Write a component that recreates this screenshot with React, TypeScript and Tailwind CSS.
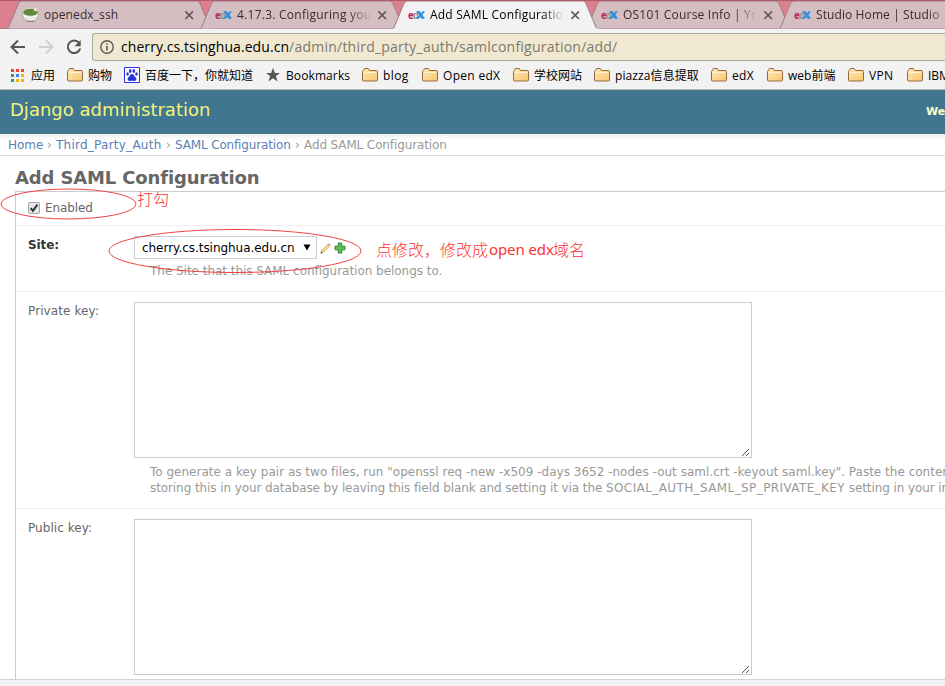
import React from "react";

const ui = "font-['Open_Sans','Noto_Sans_CJK_SC',sans-serif]";
const page = "font-['DejaVu_Sans','Noto_Sans_CJK_SC',sans-serif]";

function EdxLogo() {
  return (
    <svg width="17" height="12" viewBox="0 0 17 12" className="shrink-0">
      <text x="0" y="9.5" fontSize="10" fontWeight="bold" fontFamily="Open Sans, sans-serif" fill="#b72667">e</text>
      <text x="4.8" y="9.5" fontSize="10" fontWeight="bold" fontFamily="Open Sans, sans-serif" fill="#96949a">d</text>
      <path d="M8.500 2.200h3.300l1.500 2 1.200-2H16.500v1.400h-.6l-1.500 2.400 1.700 2.300h.4v1.500h-3l-1.500-2.100L11 9.800H8.500V8.300h.9L11.300 5.900 9.600 3.600H8.500z" fill="#2a8fe2" />
    </svg>
  );
}

function BowlLogo() {
  return (
    <svg width="17" height="16" viewBox="0 0 17 16" className="shrink-0">
      <path d="M.5 5.500c0 5 2.500 8.700 8 8.700s8-3.700 8-8.700z" fill="#fafaf5" stroke="#96948b" strokeWidth=".8" />
      <ellipse cx="8.500" cy="5.300" rx="7.700" ry="3.900" fill="#64883a" stroke="#d9dac8" strokeWidth=".8" />
      <path d="M3 10c3 2 8 2 11 0" stroke="#d4d4cc" fill="none" />
      <circle cx="13.500" cy="2.700" r="1.600" fill="#f6e6ce" />
      <path d="M5 14.300h7" stroke="#777" />
    </svg>
  );
}

function Cross() {
  return (
    <svg width="9" height="9" viewBox="0 0 9 9" className="absolute left-[180px] top-[11px]">
      <path d="M.4.4l7.600 7.600M8 .4L.4 8" stroke="#5f5557" strokeWidth="1.600" />
    </svg>
  );
}

function Tab({ title, active, bowl, tracking }: { title: string; active?: boolean; bowl?: boolean; tracking: string }) {
  return (
    <div className={`relative h-[29px] w-[193px] shrink-0 ${active ? "z-20" : "z-10"}`}>
      <svg width="209" height="30" className="absolute left-0 top-0">
        <path
          d={active ? "M-1 29.500L2 27.500L11.500 3.500Q12.500 1 15 1H190Q192.500 1 193.500 3.500L203.500 27.500L207 29.500Z" : "M1.500 28.500L12 3.500Q13 1 15.500 1H190Q192.500 1 193.500 3.500L204 28.500Z"}
          fill={active ? "#f2f2f2" : "#d4bec2"}
          transform="translate(1.500 0)"
        />
        <path
          d={active ? "M1 28.500L11.500 3.500Q12.500 1 15 1H190Q192.500 1 193.500 3.500L204 28.500" : "M1.500 28.500L12 3.500Q13 1 15.500 1H190Q192.500 1 193.500 3.500L204 28.500"}
          fill="none"
          stroke="#9b7f84"
          transform="translate(1.500 0)"
        />
      </svg>
      <div className="relative flex h-[29px] items-center pl-[17px]">
        {bowl ? <BowlLogo /> : <div className="w-[17px] pt-[1px]"><EdxLogo /></div>}
        <div
          className={`ml-[5px] w-[133px] overflow-hidden whitespace-nowrap text-[12px] leading-[20px] ${tracking} ${active ? "text-black" : "text-[#352d30]"} ${bowl ? "" : "[mask-image:linear-gradient(to_right,black_112px,transparent_135px)]"}`}
        >
          {title}
        </div>
      </div>
      <Cross />
    </div>
  );
}

function Folder() {
  return (
    <svg width="16" height="14" viewBox="0 0 16 14" className="shrink-0">
      <defs>
        <linearGradient id="folder" x1="0" y1="0" x2="1" y2="1">
          <stop offset="0" stopColor="#ffe9bb" />
          <stop offset="1" stopColor="#f9c66c" />
        </linearGradient>
      </defs>
      <path d="M.5 12V3.500L2 1.500V1q0-.5.500-.5H6q.5 0 .5.500l1 1.500h7q1 0 1 1V12q0 1-1 1h-13q-1 0-1-1z" fill="url(#folder)" stroke="#926a43" />
      <path d="M1.500 4.500h13" stroke="#fff2cf" />
    </svg>
  );
}

function Mark({ label, width, tracking = "" }: { label: string; width: string; tracking?: string }) {
  return (
    <div className={`flex shrink-0 items-center gap-[5px] ${width}`}>
      <Folder />
      <span className={`whitespace-nowrap pt-[2px] ${tracking}`}>{label}</span>
    </div>
  );
}

const apps = ["#ea4335", "#ea4335", "#ea4335", "#34a05a", "#3b84e8", "#f0b400", "#34a05a", "#f0b400", "#f0b400"];

function Chrome() {
  return (
    <div className={ui}>
      <div className="flex h-[29px] overflow-hidden border-t border-[#b35c69] bg-[#dc7f8e] pl-[5px] shadow-[inset_0_-1px_0_#a58389]">
        <div className="-mt-px flex">
          <Tab title="openedx_ssh" bowl tracking="tracking-[0.1px]" />
          <Tab title="4.17.3. Configuring your SP" tracking="tracking-[0.25px]" />
          <Tab title="Add SAML Configuration" active tracking="tracking-[0.2px]" />
          <Tab title="OS101 Course Info | Your" tracking="tracking-[0.2px]" />
          <Tab title="Studio Home | Studio" tracking="tracking-[0.1px]" />
        </div>
      </div>
      <div className="flex h-[32px] items-center bg-[#f2f2f2]">
        <div className="flex w-[92px] shrink-0 items-center gap-[12px] pl-[10px] pt-[4px]">
          <svg width="16" height="16" viewBox="0 0 16 16" fill="none" stroke="#555" strokeWidth="2">
            <path d="M15 8H2M8 1.500L1.500 8 8 14.500" />
          </svg>
          <svg width="16" height="16" viewBox="0 0 16 16" fill="none" stroke="#d0d0d0" strokeWidth="2">
            <path d="M1 8h13M8 1.500L14.500 8 8 14.500" />
          </svg>
          <svg width="16" height="16" viewBox="0 0 16 16">
            <path d="M13 3.700A6.300 6.300 0 1 0 14.200 9.500" fill="none" stroke="#555" strokeWidth="2" />
            <path d="M14.700 1v6.200H8.500z" fill="#555" />
          </svg>
        </div>
        <div className="mt-[4px] flex h-[28px] grow items-center rounded-l-[3px] border border-r-0 border-[#aaa6a0] bg-[#f0e8d0] pl-[7px]">
          <svg width="14" height="14" viewBox="0 0 14 14">
            <circle cx="7" cy="7" r="6.200" fill="none" stroke="#5b5b5b" strokeWidth="1.400" />
            <path d="M7 6v4.500M7 3.300v1.500" stroke="#5b5b5b" strokeWidth="1.600" />
          </svg>
          <span className="-mt-px ml-[7px] whitespace-nowrap text-[14px] tracking-[0.07px] text-black">
            cherry.cs.tsinghua.edu.cn<span className="tracking-[0.23px] text-[#7d796c]">/admin/third_party_auth/samlconfiguration/add/</span>
          </span>
        </div>
      </div>
      <div className="flex h-[29px] items-center overflow-hidden border-b border-[#b6b4b5] bg-[#f2f2f2] pl-[11px] text-[12px] text-black">
        <div className="flex w-[56px] shrink-0 items-center gap-[7px]">
          <div className="grid shrink-0 grid-cols-3 gap-[2px]">
            {apps.map((c, i) => (
              <i key={i} className="block size-[3px]" style={{ backgroundColor: c }} />
            ))}
          </div>
          <span className="whitespace-nowrap pt-[2px]">应用</span>
        </div>
        <Mark label="购物" width="w-[57px]" />
        <div className="flex w-[142px] shrink-0 items-center gap-[5px]">
          <svg width="16" height="16" viewBox="0 0 16 16" className="shrink-0">
            <path d="M.5.500h15v15H.5z" fill="#fff" stroke="#2932e1" />
            <g fill="#2932e1">
              <ellipse cx="3.600" cy="7" rx="1.300" ry="1.800" />
              <ellipse cx="6.200" cy="4" rx="1.300" ry="1.900" />
              <ellipse cx="9.800" cy="4" rx="1.300" ry="1.900" />
              <ellipse cx="12.500" cy="7" rx="1.300" ry="1.800" />
              <path d="M8 7c2 0 2 2 3.500 3.300 2 2 .5 4-1.500 3.600-1.400-.3-2.600-.3-4 0-2 .4-3.500-1.600-1.500-3.600C6 9 6 7 8 7z" />
            </g>
          </svg>
          <span className="whitespace-nowrap pt-[2px]">百度一下，你就知道</span>
        </div>
        <div className="flex w-[96px] shrink-0 items-center gap-[6px]">
          <svg width="14" height="14" viewBox="0 0 14 14">
            <path d="M7 0l1.900 4.900H14L9.900 8.100 11.500 13.500 7 10.300 2.500 13.500 4.100 8.100 0 4.900h5.100z" fill="#555" />
          </svg>
          <span className="pt-[2px] tracking-[0.1px]">Bookmarks</span>
        </div>
        <Mark label="blog" width="w-[60px]" tracking="tracking-[0.4px]" />
        <Mark label="Open edX" width="w-[91px]" tracking="tracking-[0.3px]" />
        <Mark label="学校网站" width="w-[81px]" />
        <Mark label="piazza信息提取" width="w-[117px]" tracking="tracking-[0.1px]" />
        <Mark label="edX" width="w-[56px]" tracking="tracking-[0.3px]" />
        <Mark label="web前端" width="w-[81px]" />
        <Mark label="VPN" width="w-[59px]" tracking="tracking-[0.3px]" />
        <Mark label="IBM" width="w-[60px]" />
      </div>
    </div>
  );
}

function KeyField({ label, height, tracking, children }: { label: string; height: string; tracking: string; children?: React.ReactNode }) {
  return (
    <div className={`${height} shrink-0 border-b border-[#eee] pl-[12px] pt-[10px]`}>
      <div className="flex">
        <div className={`w-[106px] shrink-0 pt-px text-[12px] leading-[16px] text-[#666] ${tracking}`}>{label}</div>
        <div className="flex h-[156px] w-[618px] shrink-0 items-end justify-end border border-[#ccc] bg-white">
          <svg width="10" height="10" viewBox="0 0 10 10" className="mr-px" shapeRendering="crispEdges">
            <path d="M2 9L9 2M6 9l3-3" stroke="#555" />
          </svg>
        </div>
      </div>
      {children}
    </div>
  );
}

export default function App() {
  return (
    <div className="relative flex h-[686px] w-[945px] flex-col overflow-hidden bg-white">
      <Chrome />
      <div className={`flex min-h-0 grow flex-col ${page}`}>
        <div className="flex h-[44px] shrink-0 items-center justify-between bg-[#417690] pl-[10px]">
          <h1 className="pb-[6px] text-[18px] tracking-[0.01px] text-[#f4f379]">Django administration</h1>
          <div className="w-[19px] overflow-hidden whitespace-nowrap text-[11px] font-bold text-[#ffffcc]">Welcome</div>
        </div>
        <div className="flex h-[22px] shrink-0 gap-[4px] whitespace-nowrap border-b border-[#ddd] bg-linear-to-b from-[#eee] to-white to-30% pl-[8px] pt-px text-[12px] leading-[21px] text-[#999]">
          <span className="w-[35px] text-[#5b80b2]">Home</span>
          <span className="w-[5px]">›</span>
          <span className="w-[106px] tracking-[0.25px] text-[#5b80b2]">Third_Party_Auth</span>
          <span className="w-[5px]">›</span>
          <span className="w-[116px] tracking-[-0.15px] text-[#5b80b2]">SAML Configuration</span>
          <span className="w-[5px]">›</span>
          <span className="tracking-[-0.12px]">Add SAML Configuration</span>
        </div>
        <h2 className="h-[35px] shrink-0 pl-[15px] pt-[10px] text-[18px] font-bold leading-[24px] tracking-[-0.14px] text-[#666]">Add SAML Configuration</h2>
        <div className="ml-[15px] flex min-h-0 grow flex-col overflow-hidden border-l border-t border-[#ccc]">
          <div className="flex h-[34px] shrink-0 items-center border-b border-[#eee] pl-[12px] text-[12px] text-[#666]">
            <svg width="12" height="12" viewBox="0 0 12 12" className="-mt-px mr-[5px]">
              <rect x=".5" y=".5" width="11" height="11" rx="1.500" fill="#e8e8e8" stroke="#a4a4a4" />
              <path d="M2.700 6.200l2.200 2.600L9.400 2.600" fill="none" stroke="#333" strokeWidth="2" />
            </svg>
            <span className="pb-[2px] tracking-[-0.1px]">Enabled</span>
          </div>
          <div className="h-[66px] shrink-0 border-b border-[#eee] pl-[12px] pt-[10px]">
            <div className="flex h-[24px]">
              <div className="w-[106px] pt-px text-[12px] font-bold leading-[17px] tracking-[-0.1px] text-[#333]">Site:</div>
              <div className="flex h-[23px] w-[183px] items-center justify-between border border-[#ccc] pl-[7px] pr-[5px] text-[12px] text-black">
                <span className="tracking-[-0.04px]">cherry.cs.tsinghua.edu.cn</span>
                <svg width="8" height="7" viewBox="0 0 8 7" className="-mt-px"><path d="M.5.500h7L4 6.500z" fill="#000" /></svg>
              </div>
              <svg width="12" height="12" viewBox="0 0 12 12" className="ml-[3px] mt-[6px]">
                <path d="M1 11l.8-2.700L7.800 2.200l1.900 1.900-6 6z" fill="#f7dd8d" stroke="#b89a55" strokeWidth=".7" />
                <path d="M7.700 2.100L9 .9l2 2-1.200 1.300z" fill="#e79bd0" />
                <path d="M.6 11.400l.5-1.800 1.300 1.300z" fill="#333" />
              </svg>
              <svg width="12" height="12" viewBox="0 0 12 12" className="ml-[2px] mt-[6px]">
                <path d="M4.200 1h3.600v3.200H11v3.600H7.800V11H4.200V7.800H1V4.200h3.200z" fill="#62bb58" stroke="#338a36" />
              </svg>
            </div>
            <div className="pl-[122px] pt-px text-[12px] leading-[21px] tracking-[-0.03px] text-[#999]">The Site that this SAML configuration belongs to.</div>
          </div>
          <KeyField label="Private key:" height="h-[217px]" tracking="tracking-[0.1px]">
            <div className="whitespace-nowrap pl-[122px] pt-[6px] text-[12px] leading-[16px] text-[#999]">
              <div className="tracking-[0.01px]">
                To generate a key pair as two files, run "openssl req -new -x509 -days 3652 -nodes -out saml.crt -keyout saml.key". Paste the contents
              </div>
              <div className="tracking-[-0.09px]">
                storing this in your database by leaving this field blank and setting it via the{" "}
                <span className="tracking-[0.4px]">SOCIAL_AUTH_SAML_SP_PRIVATE_KEY</span> setting in your instance
              </div>
            </div>
          </KeyField>
          <KeyField label="Public key:" height="h-[217px]" tracking="tracking-[0.05px]" />
        </div>
      </div>
      <div className="h-[7px] shrink-0 border-t border-[#d2d2d2] bg-[#f2f2f2]" />

      <svg width="365" height="280" className="pointer-events-none absolute left-0 top-0" fill="none" stroke="#f04444">
        <ellipse cx="68.500" cy="204" rx="67.500" ry="15" />
        <ellipse cx="235" cy="251" rx="126" ry="21.500" />
      </svg>
      <div className="absolute left-[137px] top-[186px] whitespace-nowrap font-['Noto_Sans_CJK_SC',sans-serif] text-[16px] font-light leading-[24px] text-[#fa3232]">打勾</div>
      <div className="absolute left-[376px] top-[237px] flex whitespace-nowrap font-['Noto_Sans_CJK_SC',sans-serif] text-[16px] font-light leading-[24px] text-[#fa3232]">
        点修改，修改成
        <span className="w-[65px] pl-px font-['Noto_Sans',sans-serif] text-[15px] font-normal tracking-[-0.1px]">open edx</span>
        域名
      </div>
    </div>
  );
}
